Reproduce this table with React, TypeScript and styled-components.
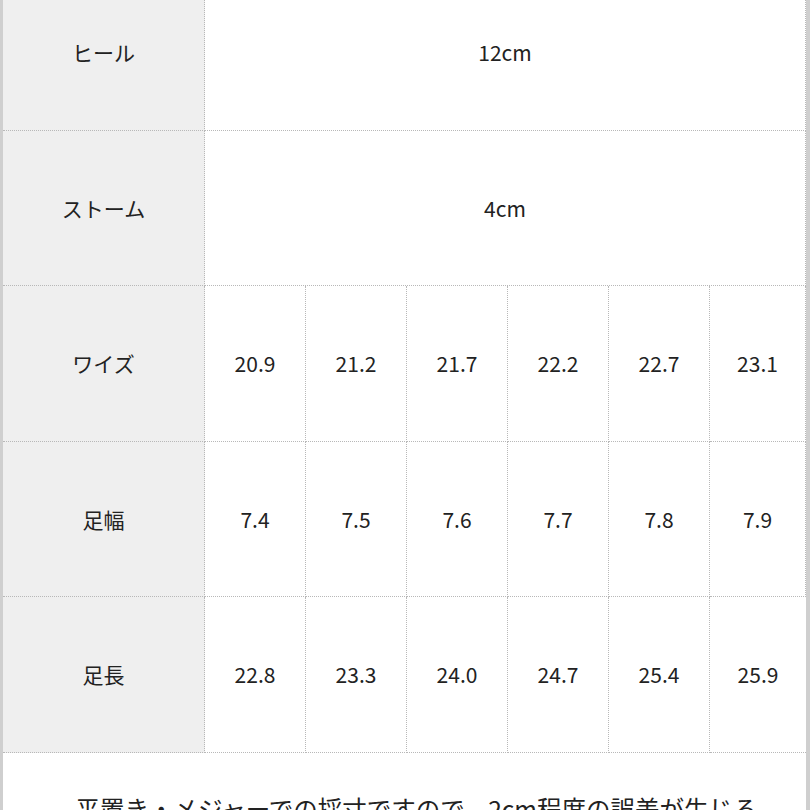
import React from 'react';
import styled, { createGlobalStyle } from 'styled-components';

const GlobalStyle = createGlobalStyle`
    html, body {
        margin: 0;
        padding: 0;
        background: #ffffff;
        overflow: hidden;
    }
`;

const Page = styled.div`
    width: 810px;
    height: 810px;
    overflow: hidden;
    box-sizing: border-box;
    border-left: 3px solid #cfcfcf;
    border-right: 4px solid #cfcfcf;
    font-family: 'Noto Sans CJK JP', 'Noto Sans', sans-serif;
    color: #222222;
`;

const Table = styled.div`
    display: grid;
    grid-template-columns: 202px repeat(5, 101px) 1fr;
    grid-auto-rows: 155.5px;
    margin-top: -25px;
`;

interface CellProps {
    isLabel?: boolean;
    span?: number;
}

const Cell = styled.div<CellProps>`
    display: flex;
    align-items: center;
    justify-content: center;
    font-size: 21px;
    background: ${props => (props.isLabel ? '#efefef' : '#ffffff')};
    border-right: 1px dotted #b8b8b8;
    border-bottom: 1px dotted #b8b8b8;
    grid-column: ${props => (props.span ? `span ${props.span}` : 'auto')};

    &:last-child {
        border-right: none;
    }
`;

const Note = styled.p`
    max-width: 690px;
    margin: 0 auto;
    padding: 38px 0 0 24px;
    font-size: 24.5px;
    line-height: 36px;
    text-align: center;
`;

const ROWS: { label: string; values: string[] }[] = [
    { label: 'ヒール', values: ['12cm'] },
    { label: 'ストーム', values: ['4cm'] },
    { label: 'ワイズ', values: ['20.9', '21.2', '21.7', '22.2', '22.7', '23.1'] },
    { label: '足幅', values: ['7.4', '7.5', '7.6', '7.7', '7.8', '7.9'] },
    { label: '足長', values: ['22.8', '23.3', '24.0', '24.7', '25.4', '25.9'] },
];

const App = () => (
    <>
        <GlobalStyle />
        <Page>
            <Table>
                {ROWS.map(row => (
                    <React.Fragment key={row.label}>
                        <Cell isLabel>{row.label}</Cell>
                        {row.values.map((value, i) => (
                            <Cell
                                key={`${row.label}-${i}`}
                                span={row.values.length === 1 ? 6 : undefined}
                            >
                                {value}
                            </Cell>
                        ))}
                    </React.Fragment>
                ))}
            </Table>
            <Note>平置き・メジャーでの採寸ですので、2cm程度の誤差が生じることがあります。</Note>
        </Page>
    </>
);

export default App;
